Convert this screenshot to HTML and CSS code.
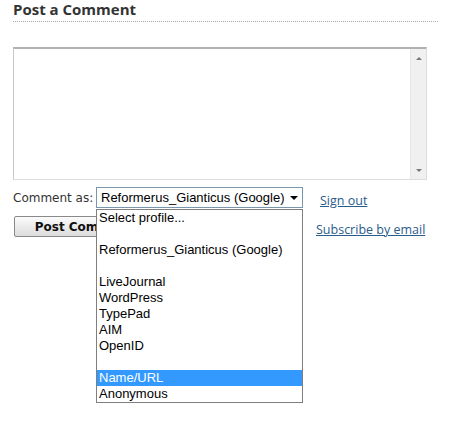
FILE: index.html
```html
<!DOCTYPE html>
<html>
<head>
<meta charset="utf-8">
<link rel="stylesheet" href="styles.css">
</head>
<body>
<div class="comments">
  <h4 class="title">Post a Comment</h4>
  <div class="editor">
    <div class="area"></div>
    <div class="scroll">
      <span class="arrow up"></span>
      <span class="arrow down"></span>
    </div>
  </div>
  <div class="controls">
    <div class="left">
      <div class="row">
        <span class="label">Comment as:</span>
        <div class="select-wrap">
          <div class="select">
            <span class="sel-text">Reformerus_Gianticus (Google)</span>
            <span class="caret"></span>
          </div>
          <ul class="menu">
            <li>Select profile...</li>
            <li></li>
            <li>Reformerus_Gianticus (Google)</li>
            <li></li>
            <li>LiveJournal</li>
            <li>WordPress</li>
            <li>TypePad</li>
            <li>AIM</li>
            <li>OpenID</li>
            <li></li>
            <li class="active">Name/URL</li>
            <li>Anonymous</li>
          </ul>
        </div>
      </div>
      <button class="btn">Post Comment</button>
    </div>
    <div class="links">
      <a class="link signout" href="#">Sign out</a>
      <a class="link subscribe" href="#">Subscribe by email</a>
    </div>
  </div>
</div>
</body>
</html>
```
FILE: styles.css
```css
html, body { margin: 0; padding: 0; background: #fff; }
body { min-height: 441px; }
.comments { padding: 0 13px; width: 425px; min-height: 441px; font-family: "DejaVu Sans", Verdana, sans-serif; color: #333; }
.title { margin: 0; padding: 0 0 3px; font-family: "Open Sans", sans-serif; font-weight: 700; font-size: 15px; line-height: 18px; color: #333; border-bottom: 1px dotted #aaa; }
.editor { margin-top: 25px; width: 414px; height: 133px; display: flex; box-sizing: border-box; border: 1px solid #ddd; border-top: 2px solid #b0b0b0; border-left: 1px solid #c8c8c8; }
.area { flex: 1; background: #fff; }
.scroll { width: 16px; background: #f0f0f0; border-left: 1px solid #e6e6e6; display: flex; flex-direction: column; justify-content: space-between; align-items: center; padding: 8px 0 7px; box-sizing: border-box; }
.arrow { width: 0; height: 0; border-left: 3px solid transparent; border-right: 3px solid transparent; }
.arrow.up { border-bottom: 3px solid #777; }
.arrow.down { border-top: 3px solid #777; }
.controls { display: flex; margin-top: 7px; }
.left { width: 303px; }
.row { display: flex; align-items: center; height: 21px; }
.label { font-size: 12px; width: 83px; }
.select-wrap { position: relative; }
.select { width: 207px; height: 21px; box-sizing: border-box; border: 1px solid #7a96ad; display: flex; align-items: center; justify-content: space-between; padding: 0 3px 0 4px; font-family: "Liberation Sans", Arial, sans-serif; font-size: 13px; color: #000; background: #fff; }
.caret { width: 0; height: 0; border-left: 4px solid transparent; border-right: 4px solid transparent; border-top: 4px solid #000; margin-right: 1px; }
.menu { position: absolute; left: 0; top: 22px; margin: 0; padding: 0; list-style: none; width: 207px; box-sizing: border-box; border: 1px solid #7f7f7f; background: #fff; font-family: "Liberation Sans", Arial, sans-serif; font-size: 13px; color: #000; z-index: 2; }
.menu li { height: 16px; line-height: 16px; padding-left: 2px; white-space: nowrap; }
.menu li.active { background: #3399ff; color: #fff; }
.btn { margin-top: 8px; margin-left: 1px; width: 140px; height: 21px; border: 1px solid #8a8a8a; border-radius: 2px; background: linear-gradient(#fbfbfb, #dcdcdc); font-family: "DejaVu Sans", Verdana, sans-serif; font-weight: 700; font-size: 12px; color: #111; padding: 0; display: block; }
.links { display: flex; flex-direction: column; align-items: flex-start; }
.link { font-family: "Open Sans", sans-serif; font-size: 12.5px; color: #2a5b8c; text-decoration: underline; line-height: 16px; }
.signout { margin: 6px 0 0 4px; }
.subscribe { margin: 13px 0 0 0; }
```
